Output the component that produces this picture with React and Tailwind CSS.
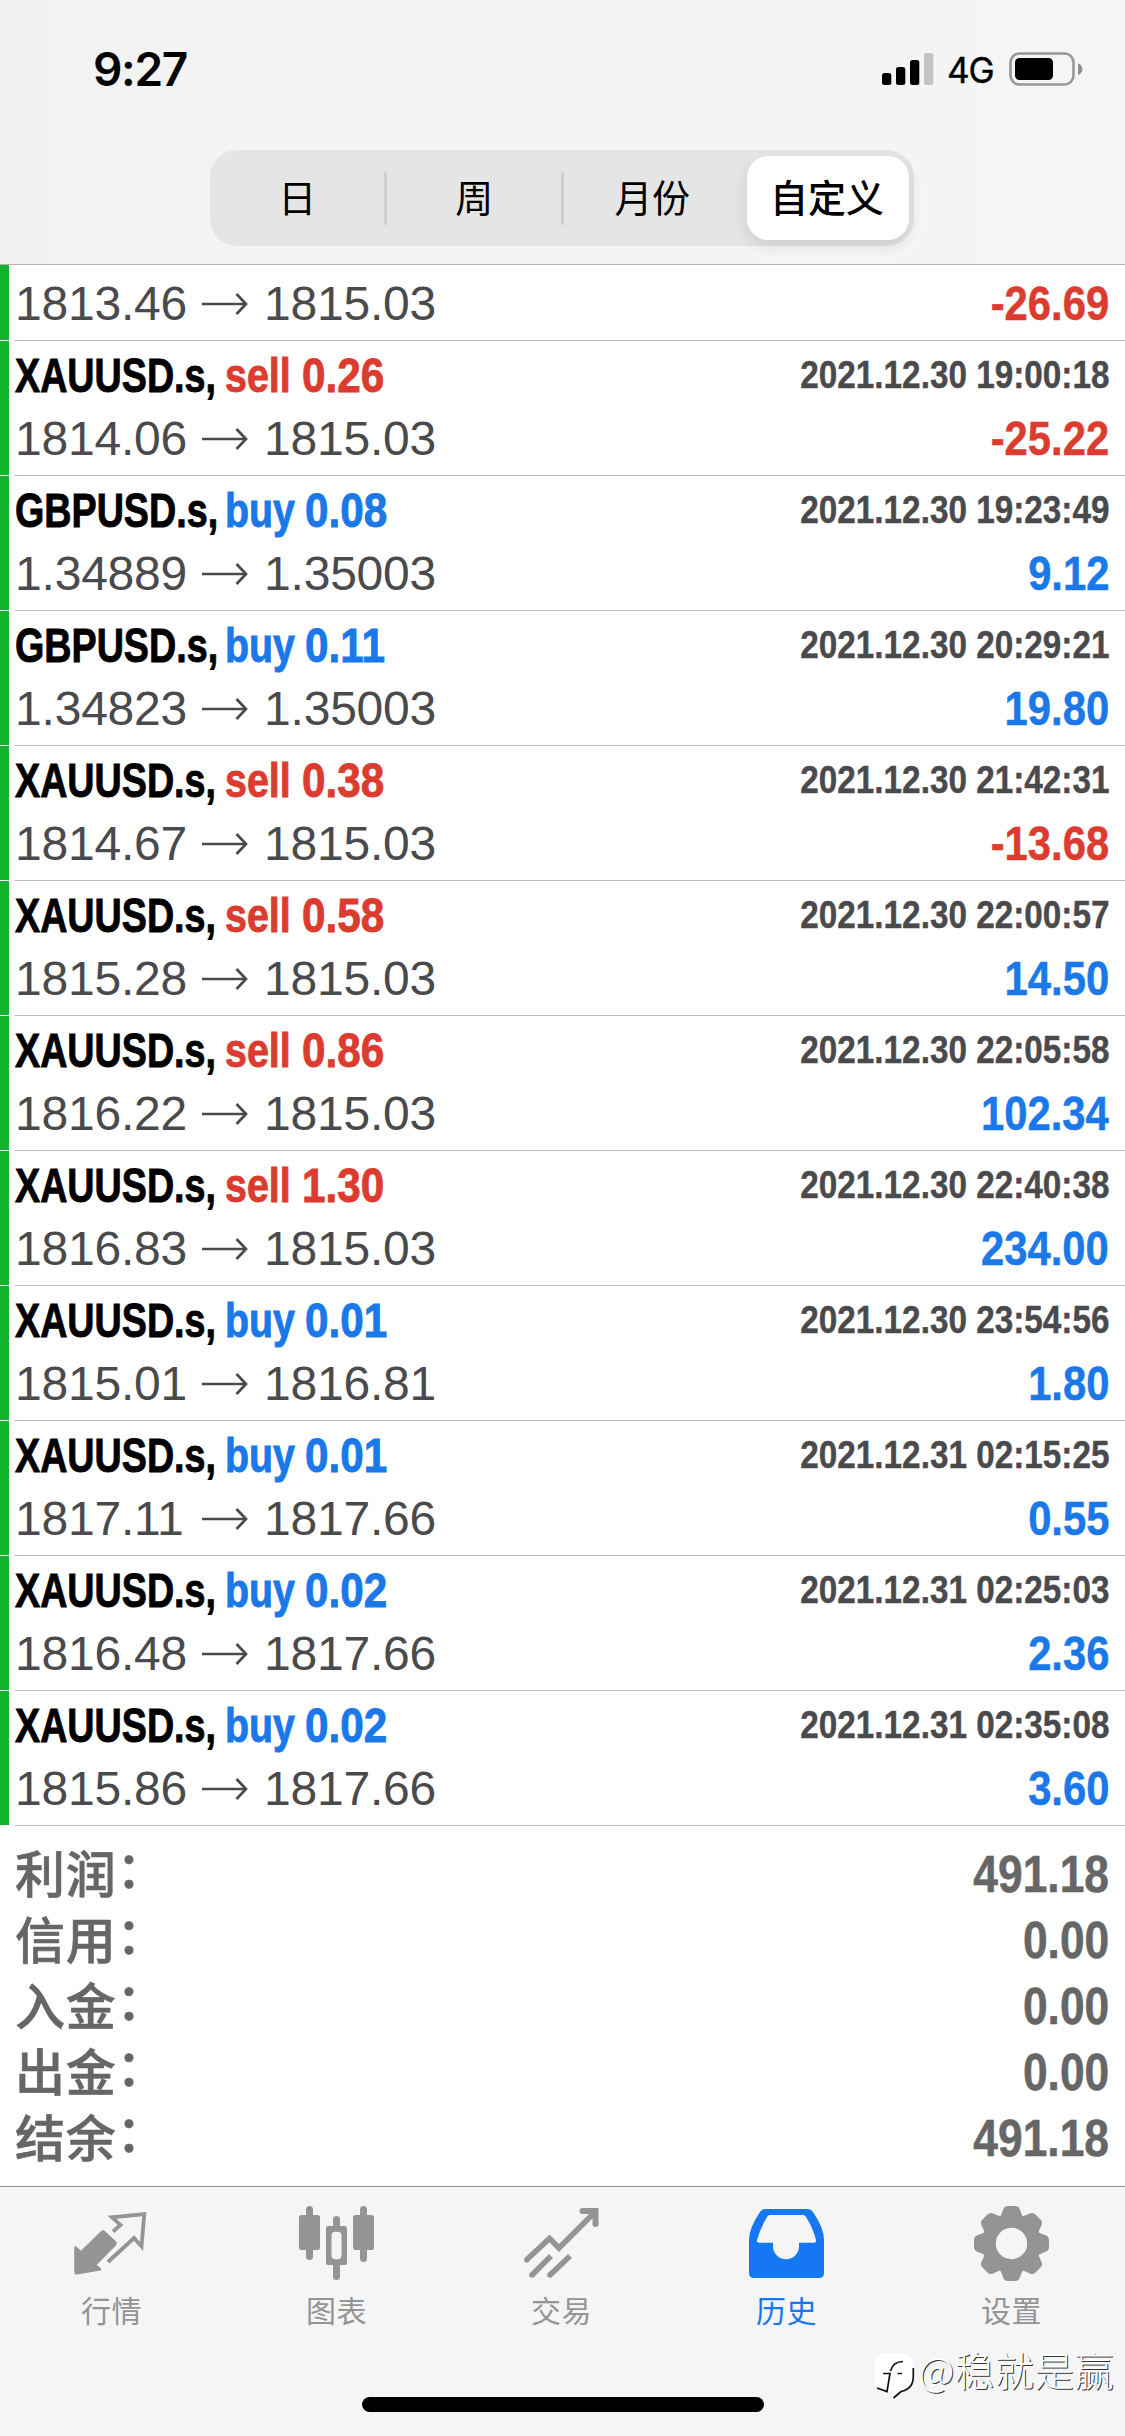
const deals = [
  { symbol: "XAUUSD.s,", side: "sell", volume: "0.26", time: "2021.12.30 19:00:18", open: "1814.06", close: "1815.03", profit: "-25.22" },
  { symbol: "GBPUSD.s,", side: "buy", volume: "0.08", time: "2021.12.30 19:23:49", open: "1.34889", close: "1.35003", profit: "9.12" },
  { symbol: "GBPUSD.s,", side: "buy", volume: "0.11", time: "2021.12.30 20:29:21", open: "1.34823", close: "1.35003", profit: "19.80" },
  { symbol: "XAUUSD.s,", side: "sell", volume: "0.38", time: "2021.12.30 21:42:31", open: "1814.67", close: "1815.03", profit: "-13.68" },
  { symbol: "XAUUSD.s,", side: "sell", volume: "0.58", time: "2021.12.30 22:00:57", open: "1815.28", close: "1815.03", profit: "14.50" },
  { symbol: "XAUUSD.s,", side: "sell", volume: "0.86", time: "2021.12.30 22:05:58", open: "1816.22", close: "1815.03", profit: "102.34" },
  { symbol: "XAUUSD.s,", side: "sell", volume: "1.30", time: "2021.12.30 22:40:38", open: "1816.83", close: "1815.03", profit: "234.00" },
  { symbol: "XAUUSD.s,", side: "buy", volume: "0.01", time: "2021.12.30 23:54:56", open: "1815.01", close: "1816.81", profit: "1.80" },
  { symbol: "XAUUSD.s,", side: "buy", volume: "0.01", time: "2021.12.31 02:15:25", open: "1817.11", close: "1817.66", profit: "0.55" },
  { symbol: "XAUUSD.s,", side: "buy", volume: "0.02", time: "2021.12.31 02:25:03", open: "1816.48", close: "1817.66", profit: "2.36" },
  { symbol: "XAUUSD.s,", side: "buy", volume: "0.02", time: "2021.12.31 02:35:08", open: "1815.86", close: "1817.66", profit: "3.60" }
]

const totals = [
  ["利润", "491.18"],
  ["信用", "0.00"],
  ["入金", "0.00"],
  ["出金", "0.00"],
  ["结余", "491.18"]
]

const periods = ["日", "周", "月份", "自定义"]

function StatusBar() {
  return (
    <div className="flex h-[150px] items-start justify-between pl-[93px] pr-[42px] pt-[41px]">
      <span className="font-['Inter'] text-[46px] font-semibold leading-[56px] tracking-[-1.3px] text-black">
        9:27
      </span>
      <div className="flex h-[56px] items-center">
        <svg width="52" height="34" viewBox="0 0 52 34" className="mr-[13px]">
          <rect x="0" y="21" width="9.3" height="12" rx="2.5" />
          <rect x="14" y="15" width="9.3" height="18" rx="2.5" />
          <rect x="28" y="8" width="9.3" height="25" rx="2.5" />
          <rect x="42" y="1" width="9.3" height="32" rx="2.5" fill="#c4c4c4" />
        </svg>
        <span className="mr-[15px] mt-[2px] w-[47px] font-['Inter'] text-[35px] leading-[56px] tracking-[-1px] text-black [-webkit-text-stroke:0.4px_black]">
          4G
        </span>
        <svg width="74" height="34" viewBox="0 0 74 34">
          <rect x="1.5" y="1.5" width="63" height="31" rx="9" fill="none" stroke="#979797" strokeWidth="2.6" />
          <rect x="6" y="6" width="38" height="22" rx="4.5" />
          <path d="M69 11.5c3 1.2 4.4 3.2 4.4 5.7s-1.400 4.500-4.400 5.700z" fill="#8e8e8e" />
        </svg>
      </div>
    </div>
  )
}

function PeriodTabs({ active }) {
  return (
    <div className="ml-[210px] flex h-[96px] w-[704px] items-center rounded-[27px] bg-[#e6e5e6] font-['Noto_Sans_CJK_SC',sans-serif] text-[38px] text-black">
      {periods.map((label, i) =>
        label === active ? (
          <div
            key={label}
            className="ml-[6px] flex h-[84px] w-[162px] items-center justify-center rounded-[21px] bg-white pr-[2px] font-medium shadow-[0_6px_16px_rgba(0,0,0,0.11)]"
          >
            <span className="-mt-[5px]">{label}</span>
          </div>
        ) : (
          <div key={label} className={i < 2 ? "flex w-[177px] items-center" : "flex w-[177px] items-center pl-[2px]"}>
            <span className="-mt-[5px] flex-1 text-center tracking-[-0.5px]">{label}</span>
            <i className={i < 2 ? "h-[54px] w-[3px] rounded bg-[#cfcfd1]" : "w-[3px]"} />
          </div>
        )
      )}
    </div>
  )
}

function PriceLine({ open, close, profit }) {
  return (
    <div className="flex h-16 items-center justify-between text-[48px] leading-[64px]">
      <div className="flex items-center tracking-[-0.2px] text-[#4a4a4c]">
        <span className="w-[187px]">{open}</span>
        <svg width="46" height="22" viewBox="0 0 46 22" className="-mt-[1px]" fill="none" stroke="#4a4a4c" strokeWidth="2.7">
          <path d="M0 11h44" />
          <path d="M34.500 1l9.500 10-9.500 10" />
        </svg>
        <span className="ml-[16px]">{close}</span>
      </div>
      <span
        className={
          "origin-right scale-x-[0.87] font-bold [-webkit-text-stroke:0.5px_currentColor] " +
          (profit.startsWith("-") ? "text-[#dc3c30]" : "text-[#1a78e8]")
        }
      >
        {profit}
      </span>
    </div>
  )
}

function Row({ children, className }) {
  return (
    <div className="flex">
      <i className="mb-px w-[9px] bg-[#10b32b]" />
      <div className={"ml-[6px] flex-1 border-b border-[#bdbdbd] pb-[4px] pr-[16px] " + className}>
        {children}
      </div>
    </div>
  )
}

function DealRow({ deal }) {
  const sell = deal.side === "sell"
  return (
    <Row className="pt-[2px]">
      <div className="flex h-16 items-center justify-between whitespace-nowrap font-bold leading-[64px]">
        <div
          className={
            "flex pt-[2px] text-[48px] [-webkit-text-stroke:0.9px_currentColor] " +
            (sell ? "text-[#dc3c30]" : "text-[#1a78e8]")
          }
        >
          <span className="w-[210px] origin-left scale-x-[0.785] text-black">{deal.symbol}</span>
          <span className={"origin-left scale-x-[0.82] " + (sell ? "w-[77px]" : "w-[80px]")}>
            {deal.side}
          </span>
          <span className="origin-left scale-x-[0.88]">{deal.volume}</span>
        </div>
        <span className="origin-right scale-x-[0.865] text-[38.5px] text-[#4a4a4c] [-webkit-text-stroke:0.4px_currentColor]">
          {deal.time}
        </span>
      </div>
      <PriceLine {...deal} />
    </Row>
  )
}

function QuotesIcon() {
  return (
    <svg width="75" height="75" viewBox="0 0 75 75">
      <path d="M39 25.500L46.500 19 38 11.300 70.300 8 67.500 40.500 60 32 34 56" fill="none" stroke="currentColor" strokeWidth="3.8" />
      <path
        d="M1.500 41.500L7 46.500 28 26Q29 25 30 26L41.300 36.500Q42 37.500 41 38.500L21 59 26 63.300 3 67.300Q1.500 67.500 1.500 66z"
        fill="currentColor"
        stroke="currentColor"
        strokeWidth="2.5"
        strokeLinejoin="round"
      />
    </svg>
  )
}

function ChartIcon() {
  return (
    <svg width="75" height="75" viewBox="0 0 75 75" fill="currentColor">
      <rect x="7" y="0" width="7" height="54" rx="3.5" />
      <rect x="0" y="9" width="21" height="35" rx="2.5" />
      <rect x="34" y="10" width="7" height="64" rx="3.5" />
      <rect x="27" y="20" width="21" height="39" rx="2.5" />
      <rect x="32.500" y="25.700" width="10" height="27.600" rx="4" fill="#f5f5f5" />
      <rect x="61" y="0" width="7" height="56" rx="3.5" />
      <rect x="54" y="9" width="21" height="35" rx="2.5" />
    </svg>
  )
}

function TradeIcon() {
  return (
    <svg width="75" height="75" viewBox="0 0 75 75" fill="none" stroke="currentColor" strokeWidth="5.6">
      <path d="M3 53.500L25.500 32.500 35 42 70 7" />
      <path d="M58.500 5H71.500V18" strokeWidth="6" strokeLinecap="round" />
      <path d="M2.800 53.700h.01M8 69h.01M26 69h.01" strokeLinecap="round" />
      <path d="M8 69L27 50M26 69L46 50" />
    </svg>
  )
}

function HistoryIcon() {
  return (
    <svg width="75" height="75" viewBox="0 0 75 75" fill="currentColor">
      <path
        fillRule="evenodd"
        d="M16 3H59Q62 3 64 6Q75 22 75 34V67Q75 72 70 72H5Q0 72 0 67V34Q0 22 11 6Q13 3 16 3zM21 9Q19 9 18 11Q11 23 8 34Q7.500 36.700 10 36.700H24V40.300A13 13 0 0 0 50 40.300V36.700H65Q67.500 36.700 67 34Q64 22 57 11Q56 9 54 9z"
      />
    </svg>
  )
}

function GearIcon() {
  return (
    <svg width="75" height="75" viewBox="0 0 75 75" fill="currentColor">
      {[0, 45, 90, 135, 180, 225, 270, 315].map((angle) => (
        <path
          key={angle}
          transform={`rotate(${angle} 37.5 37.5)`}
          d="M25.500 12Q27.500 8.500 29 4Q30 0 34 0H41Q45 0 46 4Q47.500 8.500 49.500 12z"
        />
      ))}
      <circle cx="37.5" cy="37.5" r="29" />
      <circle cx="37.5" cy="37.5" r="15.7" fill="#f5f5f5" />
    </svg>
  )
}

const tabs = [
  ["行情", QuotesIcon],
  ["图表", ChartIcon],
  ["交易", TradeIcon],
  ["历史", HistoryIcon],
  ["设置", GearIcon]
]

function TabBar() {
  return (
    <nav className="flex h-[250px] flex-col items-center justify-between border-t border-[#8f8f8f] bg-[#f5f5f5] pb-[24px] pt-[19px] font-['Noto_Sans_CJK_SC',sans-serif]">
      <div className="flex w-full">
        {tabs.map(([label, Icon]) => (
          <div
            key={label}
            className={
              "flex w-[225px] flex-col items-center pr-[2px] " +
              (label === "历史" ? "text-[#1677f2]" : "text-[#949494]")
            }
          >
            <Icon />
            <span className="mt-[6px] text-[30px] leading-[44px] tracking-[0.5px]">{label}</span>
          </div>
        ))}
      </div>
      <div className="h-[15px] w-[402px] rounded-full bg-black" />
    </nav>
  )
}

function Watermark() {
  return (
    <div className="absolute right-[11px] top-[2341px] flex items-start text-white">
      <svg width="42" height="48" viewBox="0 0 42 48" className="mr-[2px] mt-[12px]">
        <path d="M12 0H27Q38 0 38 12V23Q38 35 26 37L18 44 18 38H12L2 34Q0 30 0 24V12Q0 0 12 0z" fill="#fff" />
        <path d="M38.300 15V23Q38.500 36 26 38.500L18.500 45" fill="none" stroke="#111" strokeWidth="1.7" />
        <path d="M2 35L12 38.500 15 20.500H8M15.500 18Q18 8.500 28 8.500M22.500 20.500H27" fill="none" stroke="#111" strokeWidth="1.7" />
      </svg>
      <span className="font-['Noto_Sans_CJK_SC',sans-serif] text-[39.4px] font-light leading-[56px] tracking-[0.4px] [text-shadow:1px_1px_0.5px_#333]">
        @稳就是赢
      </span>
    </div>
  )
}

export default function App() {
  return (
    <div className="relative h-[2436px] w-[1125px] overflow-hidden bg-white font-['Liberation_Sans',Arial,sans-serif]">
      <header className="h-[265px] border-b border-[#b0b0b0] bg-linear-to-r from-[#eff1ef] via-[#f5f4f5] via-20% to-[#f5f5f5]">
        <StatusBar />
        <PeriodTabs active="自定义" />
      </header>

      <main className="h-[1921px]">
        <Row className="pt-[7px]">
          <PriceLine open="1813.46" close="1815.03" profit="-26.69" />
        </Row>
        {deals.map((deal) => (
          <DealRow key={deal.time} deal={deal} />
        ))}

        <div className="pl-[15px] pr-[16px] pt-[16px] text-[#666]">
          {totals.map(([label, value]) => (
            <div key={label} className="flex h-[66px] items-center justify-between leading-[66px]">
              <span className="-mt-[9px] flex font-['Noto_Sans_CJK_SC',sans-serif] text-[50px] font-medium tracking-[0.8px] [-webkit-text-stroke:0.6px_currentColor]">
                {label}
                <span className="-mt-[5px]">：</span>
              </span>
              <span className="origin-right scale-x-[0.87] text-[51px] font-bold [-webkit-text-stroke:0.5px_currentColor]">
                {value}
              </span>
            </div>
          ))}
        </div>
      </main>

      <TabBar />
      <Watermark />
    </div>
  )
}
